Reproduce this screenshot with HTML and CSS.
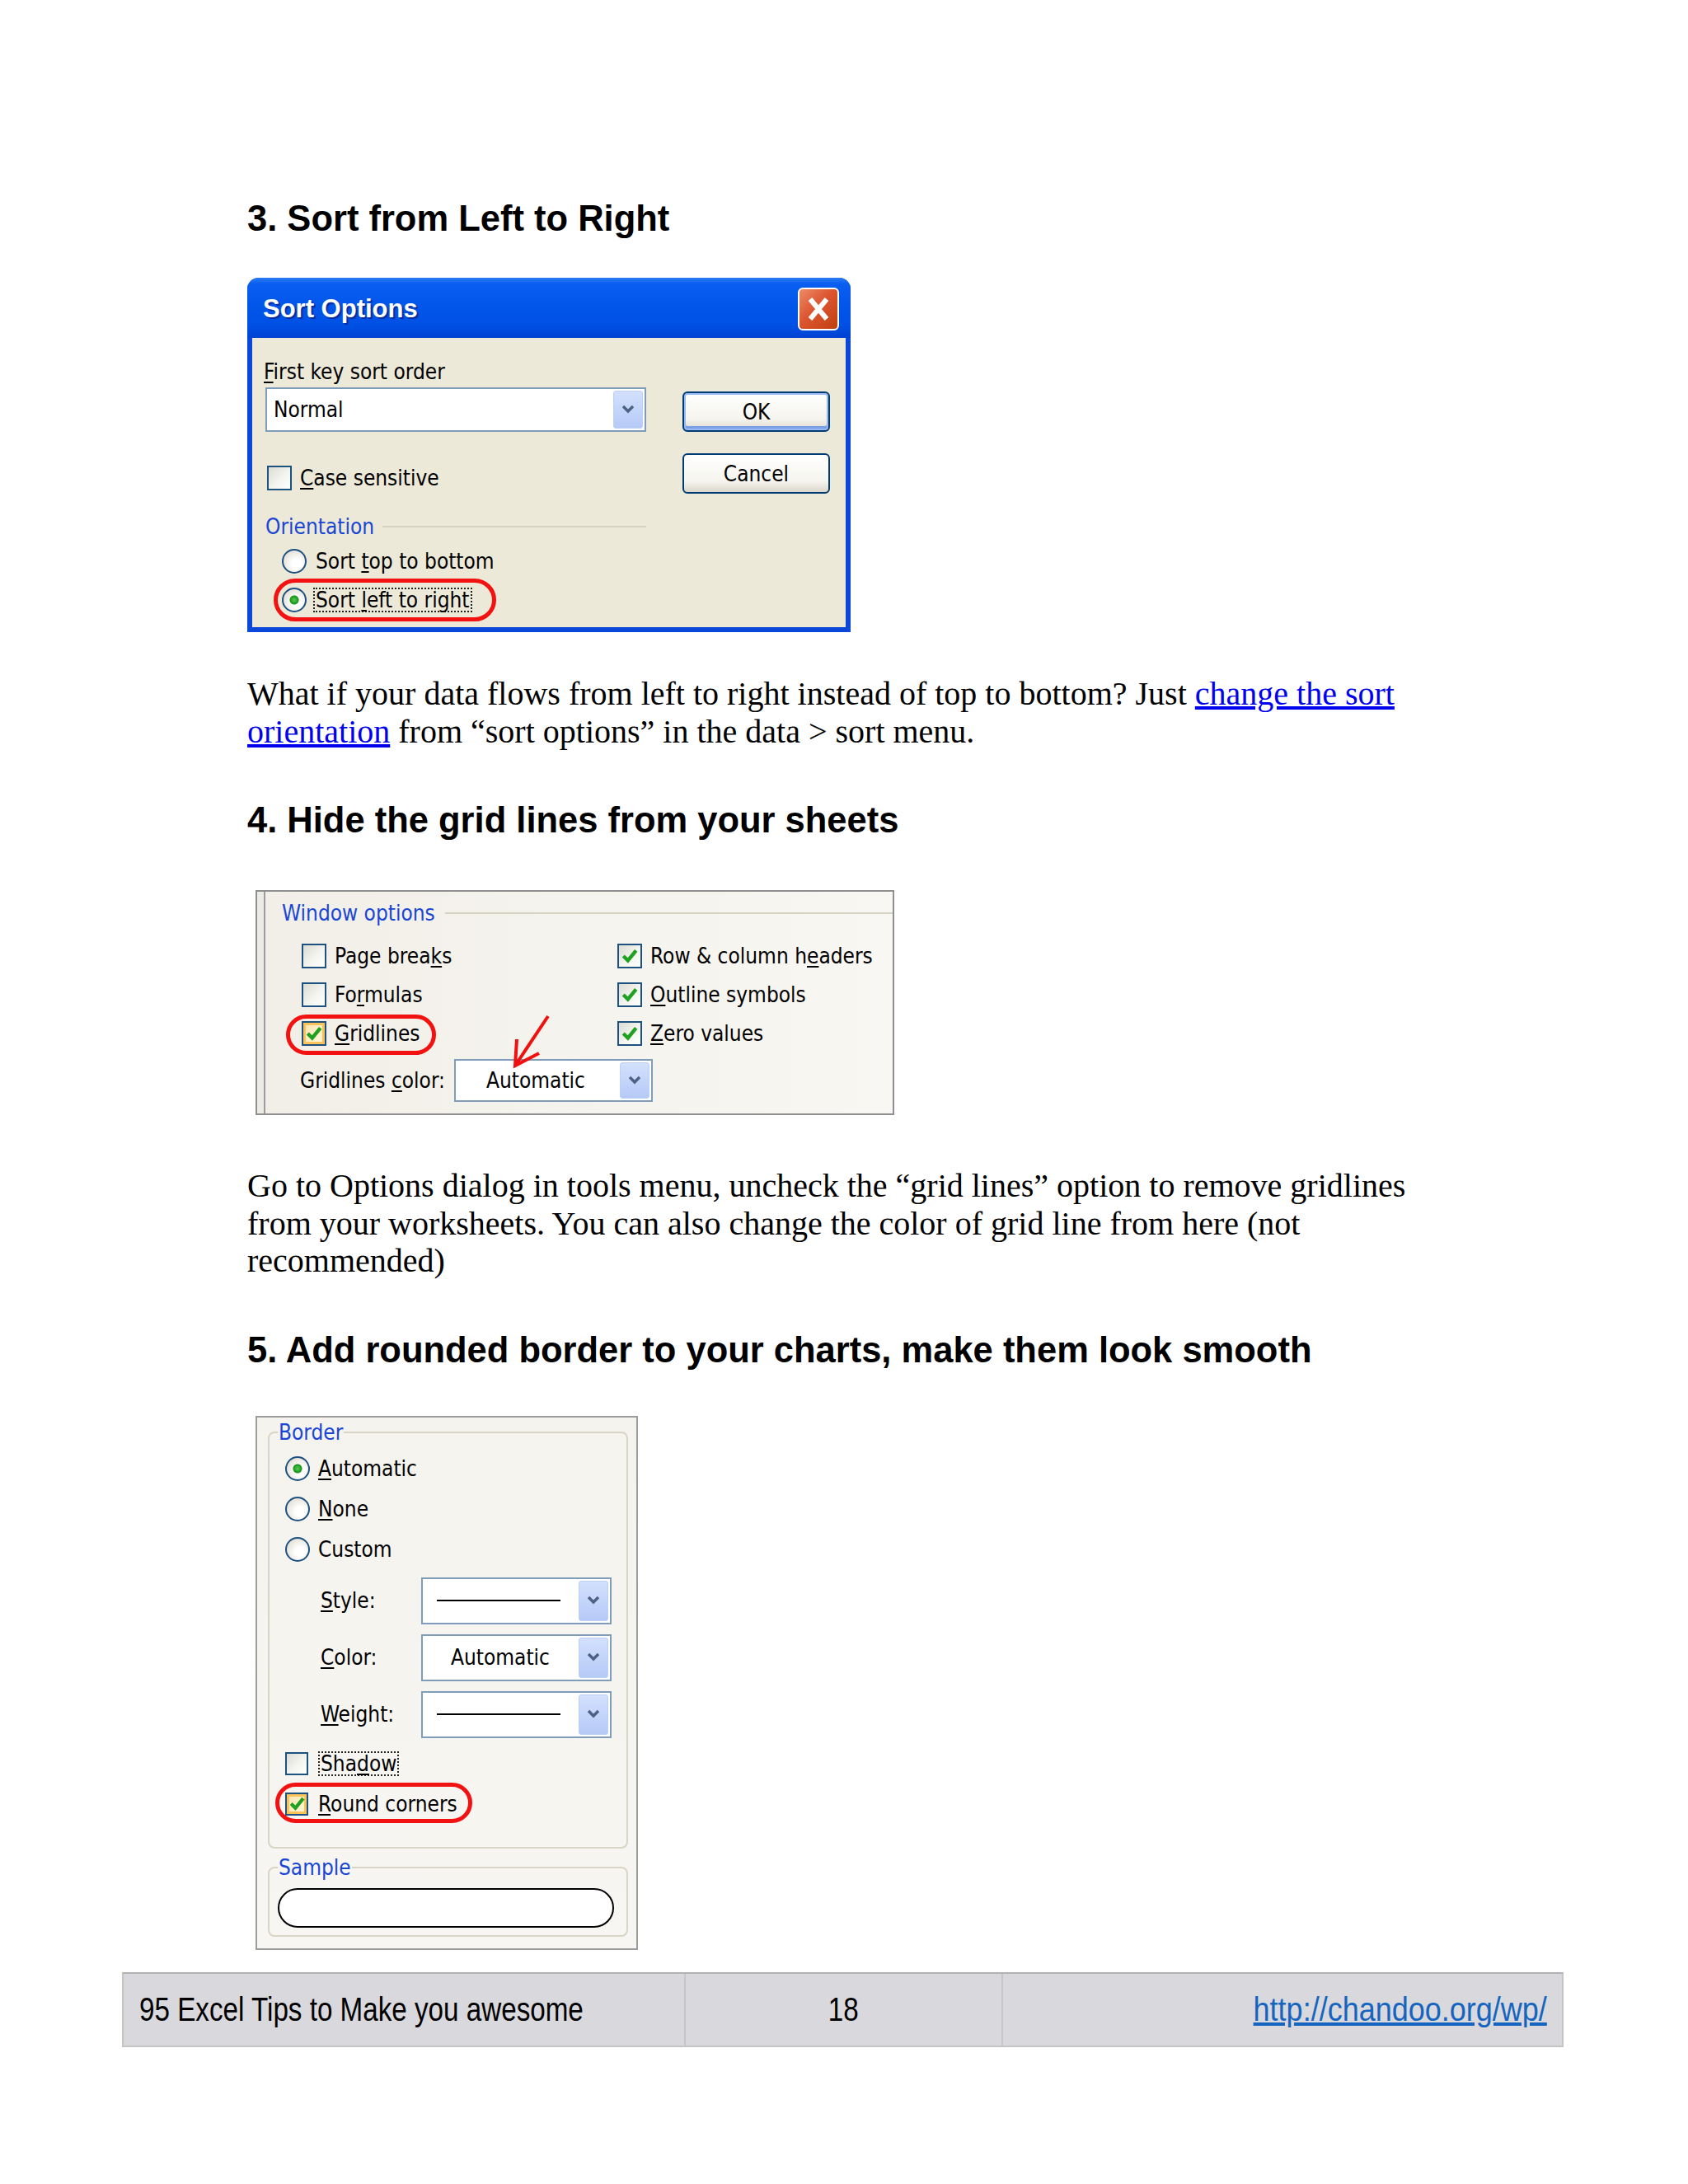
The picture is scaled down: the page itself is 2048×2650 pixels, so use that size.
FILE: index.html
```html
<!DOCTYPE html>
<html>
<head>
<meta charset="utf-8">
<title>95 Excel Tips - page 18</title>
<link rel="stylesheet" href="styles.css">
</head>
<body>
<div class="page">
  <h2 class="h">3. Sort from Left to Right</h2>

  <div class="xp dlg-sort ui">
    <div class="xp-title">
      <span class="xp-caption">Sort Options</span>
      <span class="xp-close"><svg viewBox="0 0 46 48" width="46" height="48"><path d="M13 12 L33 36 M33 12 L13 36" stroke="#fff" stroke-width="6" fill="none"/></svg></span>
    </div>
    <div class="xp-body">
      <div class="col-l">
        <div class="lbl"><u>F</u>irst key sort order</div>
        <div class="combo c-normal"><span>Normal</span><span class="drop"><svg viewBox="0 0 16 12" width="16" height="12"><path d="M2 2 L8 8 L14 2" fill="none" stroke="#4d6185" stroke-width="3.4"/></svg></span></div>
        <div class="row r-case"><span class="cb"></span><span><u>C</u>ase sensitive</span></div>
        <div class="grp-line"><span class="grp">Orientation</span><i class="sep"></i></div>
        <div class="row r-rad1"><span class="rb"></span><span>Sort <u>t</u>op to bottom</span></div>
        <div class="row r-rad2"><span class="rb on"></span><span class="focus">Sort <u>l</u>eft to right</span></div>
      </div>
      <div class="col-r">
        <div class="btn def">OK</div>
        <div class="btn">Cancel</div>
      </div>
      <span class="ring ring1"></span>
    </div>
  </div>

  <p class="txt p1">What if your data flows from left to right instead of top to bottom? Just <a href="#">change the sort</a><br><a href="#">orientation</a> from “sort options” in the data &gt; sort menu.</p>

  <h2 class="h h-grid">4. Hide the grid lines from your sheets</h2>

  <div class="win ui">
    <div class="win-title"><span class="grp">Window options</span><i class="sep"></i></div>
    <div class="win-grid">
      <div class="row"><span class="cb"></span><span>Page brea<u>k</u>s</span></div>
      <div class="row"><span class="cb"><svg class="chk" viewBox="0 0 20 20" width="22" height="22"><path d="M3 10 L8 15 L17 4" fill="none" stroke="#21a121" stroke-width="4"/></svg></span><span>Row &amp; column h<u>e</u>aders</span></div>
      <div class="row"><span class="cb"></span><span>Fo<u>r</u>mulas</span></div>
      <div class="row"><span class="cb"><svg class="chk" viewBox="0 0 20 20" width="22" height="22"><path d="M3 10 L8 15 L17 4" fill="none" stroke="#21a121" stroke-width="4"/></svg></span><span><u>O</u>utline symbols</span></div>
      <div class="row"><span class="cb hot"><svg class="chk" viewBox="0 0 20 20" width="22" height="22"><path d="M3 10 L8 15 L17 4" fill="none" stroke="#21a121" stroke-width="4"/></svg></span><span><u>G</u>ridlines</span></div>
      <div class="row"><span class="cb"><svg class="chk" viewBox="0 0 20 20" width="22" height="22"><path d="M3 10 L8 15 L17 4" fill="none" stroke="#21a121" stroke-width="4"/></svg></span><span><u>Z</u>ero values</span></div>
    </div>
    <div class="win-color">
      <span class="lab">Gridlines <u>c</u>olor:</span>
      <div class="combo c-auto"><span>Automatic</span><span class="drop"><svg viewBox="0 0 16 12" width="16" height="12"><path d="M2 2 L8 8 L14 2" fill="none" stroke="#4d6185" stroke-width="3.4"/></svg></span></div>
    </div>
    <span class="ring ring2"></span>
    <svg class="arrow" viewBox="0 0 70 80" width="70" height="80"><path d="M53 10 L13 70 M15 38 L13 70 L42 55" fill="none" stroke="#f01010" stroke-width="4"/></svg>
  </div>

  <p class="txt p2">Go to Options dialog in tools menu, uncheck the “grid lines” option to remove gridlines from your worksheets. You can also change the color of grid line from here (not recommended)</p>

  <h2 class="h h-round">5. Add rounded border to your charts, make them look smooth</h2>

  <div class="bd ui">
    <fieldset class="fs fs-border">
      <legend class="grp">Border</legend>
      <div class="row r-r1"><span class="rb on"></span><span><u>A</u>utomatic</span></div>
      <div class="row r-r"><span class="rb"></span><span><u>N</u>one</span></div>
      <div class="row r-r"><span class="rb"></span><span>Custom</span></div>
      <div class="crow crow1"><span class="clab"><u>S</u>tyle:</span><div class="combo c3"><i class="ln"></i><span class="drop"><svg viewBox="0 0 16 12" width="16" height="12"><path d="M2 2 L8 8 L14 2" fill="none" stroke="#4d6185" stroke-width="3.4"/></svg></span></div></div>
      <div class="crow"><span class="clab"><u>C</u>olor:</span><div class="combo c3"><span class="ctext">Automatic</span><span class="drop"><svg viewBox="0 0 16 12" width="16" height="12"><path d="M2 2 L8 8 L14 2" fill="none" stroke="#4d6185" stroke-width="3.4"/></svg></span></div></div>
      <div class="crow"><span class="clab"><u>W</u>eight:</span><div class="combo c3"><i class="ln"></i><span class="drop"><svg viewBox="0 0 16 12" width="16" height="12"><path d="M2 2 L8 8 L14 2" fill="none" stroke="#4d6185" stroke-width="3.4"/></svg></span></div></div>
      <div class="row r-shadow"><span class="cb sm"></span><span class="focus">Sha<u>d</u>ow</span></div>
      <div class="row r-round"><span class="cb sm hot"><svg class="chk" viewBox="0 0 20 20" width="21" height="21"><path d="M3 10 L8 15 L17 4" fill="none" stroke="#21a121" stroke-width="4"/></svg></span><span><u>R</u>ound corners</span></div>
    </fieldset>
    <fieldset class="fs fs-sample">
      <legend class="grp">Sample</legend>
      <div class="oval"></div>
    </fieldset>
    <span class="ring ring3"></span>
  </div>
</div>

<div class="foot">
  <div class="fc f1"><span class="nar">95 Excel Tips to Make you awesome</span></div>
  <div class="fc f2"><span class="nar">18</span></div>
  <div class="fc f3"><a class="nar" href="#">http://chandoo.org/wp/</a></div>
</div>
</body>
</html>
```

FILE: styles.css
```css
* { box-sizing: border-box; }
html, body { margin: 0; background: #fff; }

.page { width: 2048px; padding: 240px 0 0 300px; }

.h { margin: 0; font: bold 43.5px/50px "Liberation Sans", Arial, sans-serif; color: #000; }
.h-grid { margin-top: 60px; }
.h-round { margin-top: 60px; }

.txt { margin: 0; width: 1450px; font: 40px/45.5px "Liberation Serif", "Times New Roman", serif; color: #000; }
.txt a { color: #0000ee; text-decoration: underline; }
.p1 { margin-top: 52px; }
.p2 { margin-top: 63px; }

/* shared dialog font */
.ui { font-family: "DejaVu Sans Condensed", "DejaVu Sans", Tahoma, sans-serif; font-stretch: condensed; font-size: 26px; line-height: 30px; color: #000; }
.ui u { text-decoration-thickness: 2px; text-underline-offset: 3px; }

.row { display: flex; align-items: center; gap: 10px; height: 30px; }
.grp { color: #1a46d4; }
.sep { display: block; flex: 1; height: 2px; background: #d6d3c3; }

.cb { flex: none; width: 30px; height: 30px; border: 2px solid #1c5180; background: linear-gradient(135deg, #dcdcd4, #f4f4f0 55%, #fff); display: flex; align-items: center; justify-content: center; }
.cb.sm { width: 28px; height: 28px; }
.cb.hot { background: linear-gradient(135deg, #fbe6b0, #fff6dc); box-shadow: inset 0 0 0 3px #f9c35a; }
.rb { flex: none; width: 30px; height: 30px; border-radius: 50%; border: 2px solid #1c5180; background: radial-gradient(circle at 62% 62%, #ffffff 25%, #dcd9cd 90%); }
.rb.on { background: radial-gradient(circle, #5cc85c 0, #21a121 4px, #1d8f1d 5px, transparent 6px), radial-gradient(circle at 62% 62%, #ffffff 25%, #dcd9cd 90%); }
.focus { border: 2px dotted #222; line-height: 26px; padding: 0 1px; margin-left: -3px; }

.combo { display: flex; align-items: center; justify-content: space-between; background: #fff; border: 2px solid #7f9db9; }
.drop { flex: none; width: 36px; height: calc(100% - 4px); margin-right: 2px; border-radius: 3px; border: 1px solid #bcd0f6; background: linear-gradient(#d3e0fd, #b6caf7); display: flex; align-items: center; justify-content: center; }

.ring { position: absolute; border: 5px solid #f21212; border-radius: 28px; }

/* ---------- Sort Options dialog ---------- */
.xp { margin-top: 47px; width: 732px; height: 430px; background: #0b47d8; border-radius: 14px 14px 0 0; display: flex; flex-direction: column; }
.xp-title { height: 73px; border-radius: 14px 14px 0 0; background: linear-gradient(#2b7cf5 0%, #0a5ef0 10%, #0256ea 45%, #0050e4 80%, #0042d2 100%); display: flex; align-items: center; justify-content: space-between; padding: 2px 14px 0 19px; }
.xp-caption { font: bold 31px/36px "Liberation Sans", Arial, sans-serif; color: #fff; text-shadow: 2px 2px 1px #0a2a9a; }
.xp-close { width: 50px; height: 52px; border: 2px solid #fff; border-radius: 6px; background: linear-gradient(135deg, #ee8a68, #dc5530 45%, #c0400f); display: flex; align-items: center; justify-content: center; }
.xp-body { position: relative; margin: 0 6px 6px; height: 351px; background: #ece9d8; display: flex; padding: 26px 0 0 14px; }

.col-l { width: 464px; display: flex; flex-direction: column; }
.lbl { height: 30px; }
.c-normal { margin: 4px 0 0 2px; width: 462px; height: 54px; padding-left: 8px; }
.r-case { margin-top: 40px; height: 31px; padding-left: 4px; }
.grp-line { margin-top: 29px; height: 30px; display: flex; align-items: center; padding-left: 2px; }
.grp-line .sep { margin-left: 10px; }
.r-rad1 { margin-top: 12px; padding-left: 22px; gap: 11px; }
.r-rad2 { margin-top: 17px; padding-left: 22px; gap: 11px; }

.col-r { margin-left: 44px; padding-top: 39px; display: flex; flex-direction: column; gap: 26px; }
.btn { width: 179px; height: 49px; border: 2px solid #003c74; border-radius: 6px; background: linear-gradient(#ffffff, #f5f4ee 70%, #dcd7cc); display: flex; align-items: center; justify-content: center; }
.btn.def { box-shadow: inset 0 0 0 2px #98b8f2, inset 0 -3px 0 2px #7aa0ea; }
.ring1 { left: 26px; top: 292px; width: 270px; height: 52px; }

/* ---------- Window options ---------- */
.win { position: relative; margin: 60px 0 0 10px; width: 775px; height: 273px; border: 2px solid #8f8f8f; background: linear-gradient(90deg, #f1efe7, #f8f7f3); box-shadow: inset 8px 0 0 #ecebe6, inset 10px 0 0 #9c9c9c; padding: 11px 0 0 30px; }
.win-title { display: flex; align-items: center; height: 30px; }
.win-title .sep { margin-left: 12px; }
.win-grid { margin: 22px 0 0 24px; display: grid; grid-template-columns: 383px auto; row-gap: 17px; }
.win-color { margin: 16px 0 0 22px; display: flex; align-items: center; height: 52px; }
.win-color .lab { width: 187px; }
.c-auto { width: 241px; height: 52px; padding-left: 37px; }
.ring2 { left: 35px; top: 149px; width: 182px; height: 49px; }
.arrow { position: absolute; left: 300px; top: 141px; }

/* ---------- Border dialog ---------- */
.bd { position: relative; margin: 55px 0 0 10px; width: 464px; height: 648px; border: 2px solid #9d9d9d; background: linear-gradient(#f4f3ee, #f7f6f2); padding: 3px 0 0 13px; }
.fs { margin: 0; min-width: 0; width: 437px; border: 2px solid #d8d5c6; border-radius: 8px; padding: 0 0 0 19px; }
.fs legend { margin-left: -9px; padding: 0 1px; height: 30px; line-height: 30px; }
.fs-border { height: 520px; }
.r-r1 { margin-top: 14px; }
.r-r { margin-top: 19px; }
.crow { margin-top: 12px; height: 57px; display: flex; align-items: center; padding-left: 43px; }
.crow1 { margin-top: 19px; }
.clab { width: 122px; }
.c3 { width: 231px; height: 57px; padding-left: 17px; }
.ln { display: block; width: 150px; height: 2px; background: #000; }
.ctext { padding-left: 17px; }
.r-shadow { margin-top: 16px; }
.r-round { margin-top: 19px; }
.r-shadow .focus, .r-round span:last-child { margin-left: 2px; }
.fs-sample { margin-top: 8px; height: 99px; }
.oval { margin: 10px 0 0 -9px; width: 408px; height: 48px; border: 2.5px solid #000; border-radius: 24px; background: #fff; }
.ring3 { left: 22px; top: 443px; width: 239px; height: 49px; }

/* ---------- Footer ---------- */
.foot { margin: 27px 0 0 148px; width: 1749px; height: 91px; display: flex; background: #d9d8dc; border: 2px solid #c4c4c4; border-top-color: #b2b2b2; }
.fc { display: flex; align-items: center; font-family: "Liberation Sans Narrow", "Arial Narrow", "Liberation Sans", sans-serif; font-size: 40px; color: #000; }
.nar { display: inline-block; white-space: nowrap; transform: scaleX(0.83); }
.f1 { width: 680px; padding-left: 19px; }
.f1 .nar { transform-origin: left center; }
.f2 { width: 387px; justify-content: center; border-left: 2px solid #c6c6c6; border-right: 2px solid #c6c6c6; }
.f3 { flex: 1; justify-content: flex-end; padding-right: 18px; }
.f3 .nar { transform: scaleX(0.9); transform-origin: right center; }
.f3 a { color: #1565c0; text-decoration: underline; }
```
